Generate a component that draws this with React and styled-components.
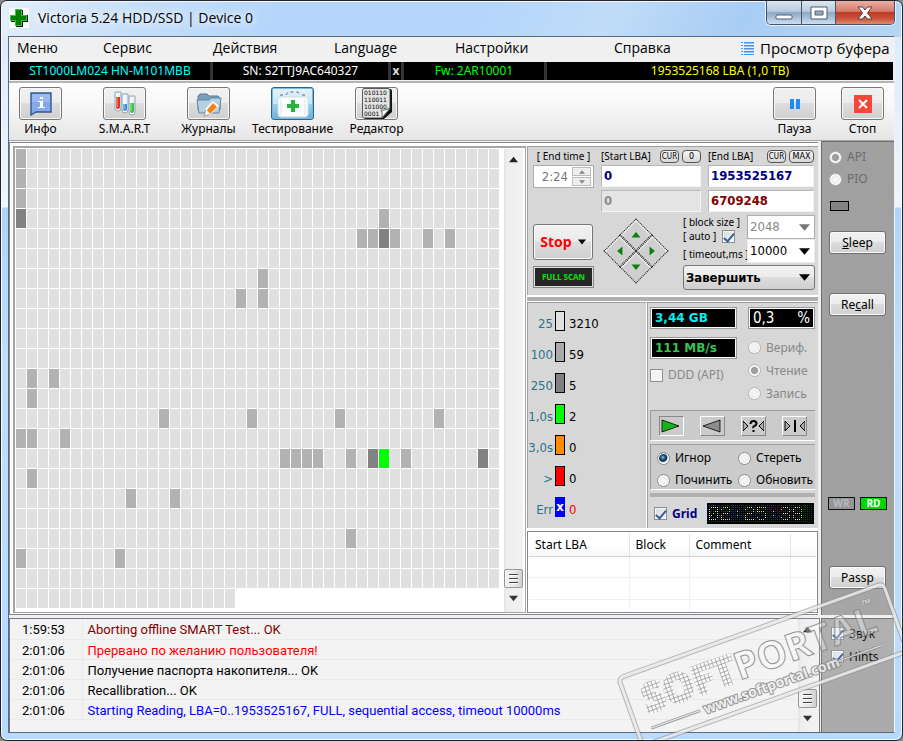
import React from "react";
import styled, { createGlobalStyle, css } from "styled-components";

const ui = '"Noto Sans", "DejaVu Sans Condensed", sans-serif';
const dense = '"DejaVu Sans Condensed", "Noto Sans", sans-serif';
const segoe = '"Open Sans", "Noto Sans", sans-serif';
const verdana = '"DejaVu Sans", sans-serif';

const Global = createGlobalStyle`
  * { box-sizing: border-box; }
  body { margin: 0; background: #8a8a8a; font: 12px/16px ${ui}; color: #000; }
  button, input, select { font: inherit; color: inherit; margin: 0; padding: 0; }
`;

/* ---------- window ---------- */
const Window = styled.div`
  position: relative;
  overflow: hidden;
  min-height: 100vh;
  display: flex;
  flex-direction: column;
  padding: 0 7px 7px;
  border: 1px solid #23232d;
  border-radius: 7px;
  background:
    linear-gradient(115deg, #e4effa 0, #c6dff8 120px, #b4d6fb 260px, #b4d6fb 440px, #c0dcf8 560px, #a8cdf4 680px, #bcd9f6 900px) top / 100% 36px no-repeat,
    linear-gradient(#d8e9fb 0, #eef6ff 206px, #aed4fc 207px, #c1defa 360px, #b7daff 100%);
  box-shadow: inset 0 0 0 1px #f4faff;
`;
const TitleBar = styled.header`
  height: 35px;
  flex: none;
  display: flex;
  justify-content: space-between;
  align-items: flex-start;
`;
const Caption = styled.div`
  display: flex;
  align-items: center;
  gap: 9px;
  margin: 7px 0 0 1px;
  h1 { margin: 0; font: 14px/20px ${segoe}; text-shadow: 0 0 8px #fff, 0 0 8px #fff; }
`;
const WindowButtons = styled.div`
  display: flex;
  height: 24px;
  border: 1px solid #48536a;
  border-top: 0;
  border-radius: 0 0 5px 5px;
  overflow: hidden;
  box-shadow: 0 0 0 1px #e3f1ff;
`;
const WindowButton = styled.button`
  width: ${(p) => p.$w};
  display: grid;
  place-items: center;
  border: 0;
  border-left: ${(p) => (p.$first ? "0" : "1px solid #48536a")};
  background: ${(p) =>
    p.$close
      ? "linear-gradient(#eaafa5 0, #d77b6b 45%, #bd3c28 50%, #c9503a 75%, #e08a70 100%)"
      : "linear-gradient(#d9e6f3 0, #b9cbde 45%, #8fa9c4 50%, #a9c2da 75%, #cde1f2 100%)"};
`;
const Client = styled.main`
  flex: 1;
  display: flex;
  flex-direction: column;
  border: 1px solid #5d6a7a;
  border-right-color: #eef3f8;
  background: #f0f0f0;
`;

/* ---------- menu and drive strip ---------- */
const Menu = styled.nav`
  display: grid;
  grid-template-columns: 86px 110px 121px 121px 159px 127px 1fr;
  align-items: start;
  height: 25px;
  padding-left: 8px;
`;
const MenuItem = styled.button`
  display: flex;
  align-items: center;
  gap: 6px;
  border: 0;
  background: none;
  text-align: left;
  white-space: nowrap;
  font: ${(p) => (p.$size || "14px")}/22px ${segoe};
`;
const Drive = styled.div`
  display: grid;
  grid-template-columns: 200px 175px 10px 140px 1fr;
  gap: 3px;
  height: 18px;
  margin: 0 1px;
  background: #333;
`;
const DriveCell = styled.div`
  background: #000;
  color: ${(p) => p.$color};
  text-align: center;
  line-height: 18px;
  white-space: nowrap;
`;
const DriveClose = styled.button`
  border: 0;
  background: #000;
  color: #ddd;
  font-weight: bold;
  line-height: 16px;
`;

/* ---------- toolbar ---------- */
const Toolbar = styled.div`
  display: flex;
  justify-content: space-between;
  height: 60px;
  margin-top: 1px;
  padding: 4px 10px 0;
  border-top: 2px solid #b4b4b4;
  border-bottom: 1px solid #a8a8a8;
  background: linear-gradient(#fff 0, #f7f7f7 40%, #e6e6e6 100%);
`;
const ToolGroup = styled.div`
  display: flex;
  gap: ${(p) => p.$gap};
`;
const Tool = styled.button`
  width: 43px;
  display: flex;
  flex-direction: column;
  align-items: center;
  border: 0;
  background: none;
  white-space: nowrap;
  line-height: 18px;
`;
const ToolFace = styled.span`
  display: grid;
  place-items: center;
  flex: none;
  width: 43px;
  height: 33px;
  border: 1px solid ${(p) => (p.$on ? "#2c628b" : "#777")};
  border-radius: 3px;
  box-shadow: inset 0 0 0 1px ${(p) => (p.$on ? "#7fb8dc" : "#f8f8f8")};
  background: ${(p) =>
    p.$on
      ? "linear-gradient(#e5f4fc 0, #c4e5f6 50%, #98d1ef 51%, #68b3db 100%)"
      : "linear-gradient(#f2f2f2 0, #ebebeb 48%, #dddddd 50%, #cfcfcf 100%)"};
`;

/* ---------- body ---------- */
const Body = styled.div`
  display: flex;
  gap: 3px;
  height: 474px;
`;
const Work = styled.div`
  flex: 1;
  display: flex;
  gap: 1px;
  margin-top: 1px;
  padding: 3px 0 1px 3px;
  border: 1px solid #828790;
  border-right: 0;
  background: #fff;
`;
const MapFrame = styled.section`
  flex: 1;
  display: flex;
  justify-content: space-between;
  border: 1px solid #a5a5a5;
  border-width: 2px 1px 1px 2px;
  padding: 1px 2px 0 1px;
`;
const Cells = styled.div`
  display: grid;
  grid-template-columns: repeat(44, 10px);
  grid-auto-rows: 19px;
  gap: 1px;
  align-content: start;
`;
const fills = { ok: "#e0e0e0", slow: "#b2b2b2", dark: "#828282", green: "#00ff00" };
const Cell = styled.i`
  background: ${(p) => fills[p.$kind]};
`;
const Scroll = styled.div`
  flex: none;
  width: 19px;
  display: flex;
  flex-direction: column;
  align-items: stretch;
  padding-bottom: 4px;
  background: linear-gradient(90deg, #e3e3e3 0, #eee 3px, #f2f2f2 100%);
`;
const Arrow = styled.button`
  height: 20px;
  border: 0;
  background: none;
  display: grid;
  place-items: center;
`;
const Thumb = styled.div`
  margin-top: auto;
  height: 19px;
  border: 1px solid #979797;
  border-radius: 2px;
  background: linear-gradient(90deg, #f5f5f5, #e9e9e9 50%, #d0d0d0);
  display: grid;
  place-items: center;
`;
const Controls = styled.section`
  flex: none;
  width: 291px;
  display: flex;
  flex-direction: column;
`;
const Panel = styled.div`
  background: #d7d7d7;
  border-top: 1px solid #a0a0a0;
  border-left: 1px solid #a0a0a0;
`;
const Divider = styled.div`
  height: 4px;
  margin: ${(p) => p.$m || "2px 0 1px"};
  background: #b0b0b0;
`;

/* ---------- scan range ---------- */
const RangePanel = styled(Panel)`
  height: 149px;
  padding: 2px 3px 0 5px;
`;
const Range = styled.div`
  display: grid;
  grid-template-columns: 61px 100px 106px;
  column-gap: 7px;
  row-gap: 2px;
`;
const RangeHead = styled.div`
  height: 14px;
  display: flex;
  align-items: center;
  gap: 3px;
  font-size: 10px;
  white-space: nowrap;
  label { flex: 1; text-align: ${(p) => (p.$center ? "center" : "left")}; }
`;
const Tiny = styled.button`
  height: 13px;
  width: ${(p) => p.$w};
  border: 1px solid #555;
  border-radius: 4px;
  background: linear-gradient(#f6f6f6, #d6d6d6);
  font: ${(p) => p.$size || "9px"}/11px ${dense};
`;
const field = css`
  border: 1px solid #b8b8b8;
  border-right-color: #f4f4f4;
  border-bottom-color: #f4f4f4;
  background: ${(p) => (p.disabled ? "#e4e4e4" : "#fff")};
`;
const Field = styled.input`
  ${field}
  width: 100%;
  height: 22px;
  padding: 0 2px 2px;
  font: bold 13px/18px ${dense};
  color: ${(p) => p.$color};
`;
const Spin = styled.div`
  height: 23px;
  display: flex;
  align-items: center;
  border: 1px solid #acacac;
  background: #fff;
  padding-right: 2px;
  input {
    flex: 1;
    min-width: 0;
    border: 0;
    background: none;
    text-align: right;
    padding-right: 4px;
    color: #777;
    font: 13px/18px ${dense};
  }
`;
const SpinButtons = styled.div`
  display: grid;
  gap: 1px;
  button { width: 19px; height: 9px; border: 1px solid #bbb; background: #eee; display: grid; place-items: center; }
`;
const Actions = styled.div`
  display: flex;
  height: 79px;
`;
const ActionCol = styled.div`
  width: 61px;
  display: flex;
  flex-direction: column;
  gap: 6px;
  padding-top: 12px;
`;
const StopButton = styled.button`
  height: 36px;
  width: 60px;
  display: flex;
  align-items: center;
  justify-content: center;
  gap: 6px;
  border: 1px solid #777;
  border-radius: 3px;
  box-shadow: inset 0 0 0 1px #fafafa;
  background: linear-gradient(#f2f2f2 0, #ebebeb 48%, #ddd 50%, #cfcfcf 100%);
  color: #f00;
  font: bold 14px/18px ${segoe};
`;
const FullScan = styled.button`
  height: 22px;
  border: 1px solid #888;
  outline: 0;
  box-shadow: inset 0 0 0 1px #ddd;
  background: #262626;
  color: #00e800;
  font: bold 8px/18px ${segoe};
  white-space: nowrap;
`;
const Pad = styled.div`
  flex: none;
  display: grid;
  grid-template-columns: 23px 23px;
  height: 46px;
  margin: 16px 24px 0 19px;
  transform: rotate(45deg);
  button {
    height: 23px;
    border: 1px dotted #111;
    background: #cfcfcf;
    box-shadow: inset 1px 1px 0 #fff;
    display: grid;
    place-items: center;
  }
  svg { transform: rotate(-45deg); }
`;
const Options = styled.div`
  flex: 1;
  min-width: 0;
  display: flex;
  flex-direction: column;
  gap: 2px;
  margin-top: 3px;
`;
const OptionGrid = styled.div`
  display: grid;
  grid-template-columns: 64px 1fr;
  font-size: 10px;
  line-height: 14px;
  white-space: nowrap;
`;
const Labels = styled.div`
  display: flex;
  flex-direction: column;
  label { display: flex; align-items: center; gap: 6px; height: 14px; }
  label:last-child { height: 16px; margin-top: 3px; }
`;
const Combo = styled.div`
  display: flex;
  align-items: center;
  height: ${(p) => p.$h || "24px"};
  padding: 0 4px 0 2px;
  border: 1px solid ${(p) => (p.$push ? "#777" : p.$off ? "#b0b0b0" : "#ececec")};
  border-radius: ${(p) => (p.$push ? "3px" : "0")};
  background: ${(p) => (p.$push ? "linear-gradient(#f2f2f2 0, #ebebeb 48%, #ddd 50%, #cfcfcf 100%)" : "#fff")};
  select {
    flex: 1;
    min-width: 0;
    appearance: none;
    border: 0;
    outline: 0;
    background: none;
    opacity: 1;
    color: ${(p) => (p.$off ? "#888" : "#000")};
    font: ${(p) => (p.$push ? "bold " : "")}13px/18px ${dense};
  }
`;

/* ---------- statistics ---------- */
const Stats = styled.div`
  flex: none;
  height: 226px;
  display: grid;
  grid-template-columns: 120px 1fr;
`;
const Legend = styled(Panel)`
  padding-top: 8px;
  border-right: 1px solid #fff;
`;
const LegendRow = styled.div`
  height: 31px;
  display: grid;
  grid-template-columns: 25px 10px 1fr;
  column-gap: 2px;
  font: 13px/18px ${dense};
  span { text-align: right; padding-top: 4px; color: #2a7488; white-space: nowrap; }
  b { font-weight: normal; padding: 4px 0 0 2px; color: ${(p) => p.$count || "#000"}; }
`;
const Swatch = styled.i`
  height: 20px;
  border: ${(p) => (p.$err ? "0" : "1px solid #000")};
  background: ${(p) => p.$color};
  color: #fff;
  font: bold 13px/20px ${dense};
  text-align: center;
`;
const Right = styled(Panel)`
  padding: 4px 3px 0 2px;
`;
const Readouts = styled.div`
  display: grid;
  grid-template-columns: 87px 67px;
  column-gap: 11px;
  height: 103px;
`;
const Column = styled.div`
  display: flex;
  flex-direction: column;
  gap: ${(p) => p.$gap};
`;
const Readout = styled.output`
  height: 22px;
  display: flex;
  justify-content: space-between;
  align-items: center;
  padding: 0 4px;
  border: 1px solid #999;
  box-shadow: inset 0 0 0 1px #fff;
  background: #000;
  color: ${(p) => p.$color};
  font: ${(p) => p.$font};
`;
const Tick = styled.label`
  display: flex;
  align-items: center;
  gap: 5px;
  height: ${(p) => p.$h || "16px"};
  color: ${(p) => p.$color || "#000"};
  white-space: nowrap;
  font-weight: ${(p) => (p.$bold ? "bold" : "normal")};
`;
const Check = styled.input`
  appearance: none;
  flex: none;
  width: 13px;
  height: 13px;
  border: 1px solid #8e8f8f;
  box-shadow: inset 0 0 0 1px #f6f6f6;
  background: ${(p) => (p.disabled ? "#f4f4f4" : "linear-gradient(135deg, #d5dae0, #f8f8f8)")};
  display: grid;
  place-items: center;
  &:checked::after {
    content: "";
    width: 4px;
    height: 9px;
    border: solid #3a5f9e;
    border-width: 0 2px 2px 0;
    transform: rotate(40deg);
  }
`;
const Radio = styled.input`
  appearance: none;
  flex: none;
  width: 13px;
  height: 13px;
  border: 1px solid ${(p) => (p.disabled ? "#b4b4b4" : "#8a8d92")};
  border-radius: 50%;
  background: radial-gradient(#f8f8f8, #e4e4e4);
  box-shadow: inset 0 0 0 1px #fff;
  &:checked {
    background: ${(p) =>
      p.disabled
        ? "radial-gradient(circle, #a4a4a4 0, #999 3px, #eee 4px)"
        : "radial-gradient(circle at 45% 40%, #7fd0f8 0, #1d5c8c 2px, #123048 4px, #eee 5px)"};
  }
`;
const Inset = styled.div`
  border-top: 1px solid #9c9c9c;
  border-left: 1px solid #9c9c9c;
  border-bottom: 1px solid #fff;
  background: #cbcbcb;
`;
const Transport = styled(Inset)`
  display: flex;
  gap: 16px;
  height: 31px;
  padding: 5px 0 0 8px;
`;
const Step = styled.button`
  width: 25px;
  height: 20px;
  display: grid;
  place-items: center;
  border: 1px solid;
  border-color: ${(p) => (p.$on ? "#888 #fff #fff #888" : "#fff #888 #888 #fff")};
  background: #cbcbcb;
`;
const ModeGrid = styled(Inset)`
  height: 46px;
  margin-top: 3px;
  padding: 2px 0 0 6px;
  display: grid;
  grid-template-columns: 81px 1fr;
  grid-auto-rows: 22px;
`;
const ClockRow = styled.div`
  display: flex;
  justify-content: space-between;
  align-items: center;
  padding: 0 1px 0 4px;
`;

/* ---------- defects table ---------- */
const Defects = styled.div`
  flex: 1;
  margin-top: 3px;
  border: 1px solid #828790;
  padding: 2px 1px;
  background: #fff;
`;
const DefectTable = styled.table`
  width: 100%;
  height: 100%;
  border-collapse: collapse;
  table-layout: fixed;
  th {
    height: 22px;
    padding: 0 0 0 6px;
    border-right: 1px solid #e2e2e2;
    border-bottom: 1px solid #d5d5d5;
    background: linear-gradient(#fff 50%, #f5f6f7);
    text-align: left;
    font-weight: normal;
  }
  td { padding: 0; border-right: 1px solid #f0f0f0; border-bottom: 1px solid #f0f0f0; }
  tr > :last-child { border-right: 0; }
  tr:last-child td { border-bottom: 0; }
`;

/* ---------- side column ---------- */
const Side = styled.aside`
  flex: none;
  width: 73px;
  display: flex;
  flex-direction: column;
  padding: ${(p) => p.$pad};
  border: 1px solid #6e6e6e;
  border-right: 0;
  border-bottom: 0;
  background: ${(p) => (p.$light ? "#ababab" : "#a0a0a0")};
`;
const SideButton = styled.button`
  height: 23px;
  width: 57px;
  margin-top: ${(p) => p.$top};
  border: 1px solid #707070;
  border-radius: 3px;
  background: linear-gradient(#f2f2f2 0, #ebebeb 48%, #ddd 50%, #cfcfcf 100%);
  box-shadow: inset 0 0 0 1px #fafafa;
`;
const Lamp = styled.i`
  width: 19px;
  height: 10px;
  margin: 11px 0 0 1px;
  border: 1px solid #000;
  background: #828282;
`;
const Flags = styled.div`
  display: flex;
  gap: 5px;
  margin: 181px 0 0 -1px;
`;
const Flag = styled.span`
  width: 27px;
  height: 13px;
  border: 1px solid #111;
  background: ${(p) => (p.$on ? "#00d800" : "#94959a")};
  color: ${(p) => (p.$on ? "#fff" : "#b9babd")};
  text-align: center;
  font: bold 10px/11px ${segoe};
`;

/* ---------- log ---------- */
const Bottom = styled.div`
  flex: 1;
  display: flex;
  gap: 1px;
  margin-top: 3px;
`;
const LogPane = styled.section`
  flex: 1;
  display: flex;
  justify-content: space-between;
  padding-right: 2px;
  border: 1px solid #747c88;
  border-bottom: 0;
  background: #f3f3f3;
`;
const LogTable = styled.table`
  flex: 1;
  align-self: flex-start;
  border-collapse: collapse;
  td { height: 20px; padding: 3px 0 0 5px; border-bottom: 1px solid #eaeaea; font: 13px/16px Roboto, ${ui}; }
  td:first-child { width: 72px; padding-left: 12px; border-right: 1px solid #eaeaea; }
`;
const LogRow = styled.tr`
  td:last-child { color: ${(p) => p.$color}; }
`;

/* ---------- stamp ---------- */
const Stamp = styled.svg`
  position: absolute;
  right: -7px;
  bottom: -14px;
  width: 300px;
  height: 190px;
  pointer-events: none;
`;

/* ---------- icons ---------- */
const Tri = ({ dir = "down", size = 9, color = "#000" }) => {
  const d = { down: "M0 2h10l-5 6z", up: "M0 8h10l-5-6z", left: "M8 0v10l-6-5z", right: "M2 0v10l6-5z" }[dir];
  return (
    <svg width={size} height={size} viewBox="0 0 10 10" aria-hidden="true">
      <path d={d} fill={color} />
    </svg>
  );
};

const AppIcon = () => (
  <svg width="20" height="20" viewBox="0 0 20 20" aria-hidden="true">
    <path fill="#fff" d="M0 0h20v20H0z" />
    <path fill="#111" d="M7 2h7v5h5v7h-5v5H7v-5H2V8h5z" />
    <path fill="#35c435" d="M6 1h7v6h5v6h-5v5H6v-5H1V7h5z" />
    <path fill="#008000" d="M7 2h5v6h5v4h-5v5H7v-5H2V8h5z" />
  </svg>
);

const InfoIcon = () => (
  <svg width="22" height="24" viewBox="0 0 22 24" aria-hidden="true">
    <path fill="#84a9e8" stroke="#36578a" strokeWidth="1.4" d="M1 1h20v19H6l-5 3z" />
    <path fill="#a8c4f5" d="M2 2h18v8H2z" opacity=".6" />
    <path fill="#fff" d="M10 5h3v2h-3zM8 9h5v6h2v1H8v-1h2v-5H8z" />
  </svg>
);

const TubesIcon = () => (
  <svg width="22" height="26" viewBox="0 0 22 26" aria-hidden="true">
    {[[1, 1, 6, "#e0331f"], [8, 3, 13, "#3f8fd8"], [15, 5, 12, "#3cc043"]].map(([x, y, l, c]) => (
      <g key={x}>
        <path d={`M${x} ${y}h6v16a3 3 0 0 1-6 0z`} fill="#edf5fa" stroke="#90a4b3" />
        <path d={`M${x + 1} ${l}h4v${y + 15 - l}a2 2 0 0 1-4 0z`} fill={c} />
        <path d={`M${x + 2} ${y + 2}v13`} stroke="#fff" opacity=".6" />
      </g>
    ))}
  </svg>
);

const JournalIcon = () => (
  <svg width="26" height="26" viewBox="0 0 26 26" aria-hidden="true">
    <path fill="#7b9fb8" stroke="#587b93" d="M2 5l2-2h7l2 2h9l2 2v12H2z" />
    <path fill="#b4d0e2" stroke="#638aa4" d="M1 9h12l2-2h10l-2 15H3z" />
    <path fill="#fff" stroke="#777" strokeWidth=".6" d="M8 25l2-6 4 4z" />
    <path fill="#fff" d="M9 18L17 10l6 5-9 9z" />
    <path fill="#f08418" d="M11 19l6-7 4 4-7 7z" />
  </svg>
);

const TestIcon = () => (
  <svg width="32" height="28" viewBox="0 0 32 28" aria-hidden="true">
    <path fill="none" stroke="#666" strokeDasharray="3 3" d="M9 5l2-3h10l2 3M3 5h5M25 5h4" />
    <rect x="1" y="7" width="30" height="20" rx="3" fill="#fafcfd" stroke="#d4dde2" />
    <path d="M4 9v16M28 9v16" stroke="#e0e5e8" />
    <path fill="#27b43c" d="M14 10h4v4h4v4h-4v4h-4v-4h-4v-4h4z" />
  </svg>
);

const HexIcon = () => (
  <svg width="30" height="31" viewBox="0 0 30 31" aria-hidden="true">
    <path fill="#111" d="M4 1h24q2 0 2 2v21l-8 7H4q-2 0-2-2V3q0-2 2-2z" />
    <path fill="#e4e4e4" stroke="#333" strokeWidth=".8" d="M2 .5h24q2 0 2 2V21l-8 9H2Q.5 30 .5 28V2.500Q.5 .5 2 .5z" />
    <g fontFamily="DejaVu Sans, sans-serif" fontSize="6" fill="#000">
      <text x="2" y="7">010110</text>
      <text x="2" y="14">110011</text>
      <text x="2" y="21">101000</text>
      <text x="2" y="28">0001</text>
    </g>
    <path fill="#fff" stroke="#444" strokeWidth=".8" d="M28 20l-8 10q1-6-1-8 4 1 9-2z" />
  </svg>
);

const PauseIcon = () => (
  <svg width="10" height="10" viewBox="0 0 10 10" aria-hidden="true">
    <path fill="#1e8cf5" d="M0 0h4v10H0zM6 0h4v10H6z" />
  </svg>
);

const StopIcon = () => (
  <svg width="18" height="18" viewBox="0 0 18 18" aria-hidden="true">
    <path fill="#f6473b" d="M0 0h18v18H0z" />
    <path stroke="#fff" strokeWidth="2" d="M5 5l8 8M13 5l-8 8" />
  </svg>
);

const ListIcon = () => (
  <svg width="13" height="13" viewBox="0 0 13 13" aria-hidden="true">
    {[0, 3, 6, 9, 12].map((y) => (
      <path key={y} fill="#3b97ec" d={`M0 ${y}h2v1H0zM3 ${y}h10v1H3z`} />
    ))}
    <path fill="#8cc3f7" d="M3 1h10v1H3zM3 4h10v1H3zM3 7h10v1H3zM3 10h10v1H3z" />
  </svg>
);

const Grip = () => (
  <svg width="9" height="11" viewBox="0 0 9 11" aria-hidden="true">
    <path stroke="#444" d="M0 1.500h9M0 5.500h9M0 9.500h9" />
    <path stroke="#fff" d="M0 2.500h9M0 6.500h9M0 10.500h9" />
  </svg>
);

const stepIcons = {
  play: <path d="M1 1l17 6-17 6z" fill="#17b317" stroke="#000" strokeWidth=".8" />,
  back: <path d="M18 1L1 7l17 6z" fill="#8c8c8c" stroke="#000" strokeWidth=".8" />,
  seek: (
    <>
      <path d="M0 2l5 5-5 5zM21 2l-5 5 5 5z" fill="#aaa" stroke="#000" />
      <path d="M7.500 5q0-3 3-3t3 2.500q0 1.500-2 2.500t-1 2M10.500 11v2" fill="none" stroke="#000" strokeWidth="2" />
    </>
  ),
  edge: (
    <>
      <path d="M1 2l5 5-5 5zM21 2l-5 5 5 5z" fill="#aaa" stroke="#000" />
      <path d="M11 1v12" stroke="#000" strokeWidth="2" />
    </>
  ),
};

const dots = {
  0: ["01111", "10001", "10011", "10101", "11001", "10001", "11110"],
  2: ["01110", "10001", "00001", "01110", "10000", "10000", "11111"],
  5: ["11111", "10000", "11110", "00001", "00001", "10001", "01110"],
  3: ["01110", "10001", "00001", "01110", "00001", "10001", "01110"],
  8: ["01110", "10001", "10001", "01110", "10001", "10001", "01110"],
  ":": ["00000", "00000", "00100", "00000", "00100", "00000", "00000"],
};
const Clock = ({ time }) => {
  const lit = [];
  [...time].forEach((ch, i) =>
    dots[ch].forEach((row, y) =>
      [...row].forEach((on, x) => {
        if (on === "1") lit.push(`M${2 + (i * 6 + x) * 2} ${4 + y * 2}h1v1h-1z`);
      })
    )
  );
  return (
    <svg width="107" height="21" viewBox="0 0 107 21" role="img" aria-label={time} shapeRendering="crispEdges">
      <defs>
        <pattern id="led" width="2" height="2" patternUnits="userSpaceOnUse">
          <path d="M0 0h1v1H0z" fill="#0b4d12" />
        </pattern>
      </defs>
      <path d="M0 0h107v21H0z" fill="#000" />
      <path d="M2 2h104v17H2z" fill="url(#led)" />
      <path d={lit.join("")} fill="#f3f32a" />
    </svg>
  );
};

/* ---------- data ---------- */
const marks = {
  slow: [[0, 0], [1, 0], [2, 0], [3, 33], [4, 31], [4, 32], [4, 34], [4, 37], [4, 39], [6, 22], [7, 20], [7, 22],
    [11, 1], [11, 3], [12, 1], [13, 13], [13, 21], [13, 29], [13, 38], [14, 0], [14, 1], [14, 4],
    [15, 24], [15, 25], [15, 26], [15, 27], [15, 30], [15, 35], [16, 1], [17, 10], [17, 14], [19, 30], [20, 0], [20, 9]],
  dark: [[3, 0], [4, 33], [15, 32], [15, 42]],
  green: [[15, 33]],
};
const cells = Array(22 * 44 + 20).fill("ok");
Object.entries(marks).forEach(([kind, list]) => list.forEach(([r, c]) => (cells[r * 44 + c] = kind)));

const legend = [
  ["25", "#e0e0e0", "3210"],
  ["100", "#a9a9a9", "59"],
  ["250", "#7f7f7f", "5"],
  ["1,0s", "#00ff00", "2"],
  ["3,0s", "#ff8c00", "0"],
  [">", "#ff0000", "0"],
];
const log = [
  ["1:59:53", "Aborting offline SMART Test... OK", "#800000"],
  ["2:01:06", "Прервано по желанию пользователя!", "#f00"],
  ["2:01:06", "Получение паспорта накопителя... OK", "#000"],
  ["2:01:06", "Recallibration... OK", "#000"],
  ["2:01:06", "Starting Reading, LBA=0..1953525167, FULL, sequential access, timeout 10000ms", "#00f"],
];
const tools = [
  ["Инфо", <InfoIcon />],
  ["S.M.A.R.T", <TubesIcon />],
  ["Журналы", <JournalIcon />],
  ["Тестирование", <TestIcon />, true],
  ["Редактор", <HexIcon />],
];
const controls = [
  ["Пауза", <PauseIcon />],
  ["Стоп", <StopIcon />],
];

const ToolButtons = ({ items, gap }) => (
  <ToolGroup $gap={gap}>
    {items.map(([name, icon, on]) => (
      <Tool key={name} aria-pressed={!!on}>
        <ToolFace $on={on}>{icon}</ToolFace>
        {name}
      </Tool>
    ))}
  </ToolGroup>
);

const ScrollBar = () => (
  <Scroll>
    <Arrow aria-label="Up"><Tri dir="up" color="#222" /></Arrow>
    <Thumb><Grip /></Thumb>
    <Arrow aria-label="Down"><Tri color="#333" /></Arrow>
  </Scroll>
);

export default function App() {
  return (
    <Window>
      <Global />
      <TitleBar>
        <Caption>
          <AppIcon />
          <h1>Victoria 5.24 HDD/SSD | Device 0</h1>
        </Caption>
        <WindowButtons>
          <WindowButton $first $w="34px" aria-label="Minimize">
            <svg width="18" height="14"><rect x="1" y="9" width="16" height="4" rx="1" fill="#fff" stroke="#4d5a6d" /></svg>
          </WindowButton>
          <WindowButton $w="34px" aria-label="Maximize">
            <svg width="18" height="14">
              <path fillRule="evenodd" fill="#fff" stroke="#4d5a6d" d="M1 1h16v12H1zM5 5h8v4H5z" />
            </svg>
          </WindowButton>
          <WindowButton $w="59px" $close aria-label="Close">
            <svg width="16" height="14" viewBox="0 0 16 14">
              <path fill="#fff" stroke="#5c3b40" d="M1 1h4.500L8 4l2.500-3H15l-4.500 6 4.500 6h-4.500L8 10l-2.500 3H1l4.500-6z" />
            </svg>
          </WindowButton>
        </WindowButtons>
      </TitleBar>
      <Client>
        <Menu>
          {["Меню", "Сервис", "Действия", "Language", "Настройки", "Справка"].map((m) => (
            <MenuItem key={m}>{m}</MenuItem>
          ))}
          <MenuItem $size="15px"><ListIcon />Просмотр буфера</MenuItem>
        </Menu>
        <Drive>
          <DriveCell $color="#0ff">ST1000LM024 HN-M101MBB</DriveCell>
          <DriveCell $color="#fff">SN: S2TTJ9AC640327</DriveCell>
          <DriveClose aria-label="Close drive">x</DriveClose>
          <DriveCell $color="#0f0">Fw: 2AR10001</DriveCell>
          <DriveCell $color="#ff0">1953525168 LBA (1,0 TB)</DriveCell>
        </Drive>
        <Toolbar>
          <ToolButtons items={tools} gap="41px" />
          <ToolButtons items={controls} gap="25px" />
        </Toolbar>

        <Body>
          <Work>
            <MapFrame aria-label="Surface map">
              <Cells>{cells.map((kind, i) => <Cell key={i} $kind={kind} />)}</Cells>
              <ScrollBar />
            </MapFrame>
            <Controls>
              <RangePanel>
                <Range>
                  <RangeHead $center><label htmlFor="endTime">[ End time ]</label></RangeHead>
                  <RangeHead><label htmlFor="startLba">[Start LBA]</label><Tiny $w="19px" $size="8px">CUR</Tiny><Tiny $w="19px">0</Tiny></RangeHead>
                  <RangeHead><label htmlFor="endLba">[End LBA]</label><Tiny $w="19px" $size="8px">CUR</Tiny><Tiny $w="25px">MAX</Tiny></RangeHead>
                  <Spin>
                    <input id="endTime" defaultValue="2:24" disabled />
                    <SpinButtons>
                      <button aria-label="Increase"><Tri dir="up" size={6} color="#888" /></button>
                      <button aria-label="Decrease"><Tri size={6} color="#888" /></button>
                    </SpinButtons>
                  </Spin>
                  <Field id="startLba" defaultValue="0" $color="#000080" />
                  <Field id="endLba" defaultValue="1953525167" $color="#000080" />
                  <span />
                  <Field aria-label="Start position" defaultValue="0" disabled $color="#8a8a8a" />
                  <Field aria-label="Current position" defaultValue="6709248" $color="#800000" />
                </Range>
                <Actions>
                  <ActionCol>
                    <StopButton>Stop<Tri size={8} /></StopButton>
                    <FullScan>FULL SCAN</FullScan>
                  </ActionCol>
                  <Pad>
                    <button aria-label="Up"><Tri dir="up" color="#0c800c" /></button>
                    <button aria-label="Right"><Tri dir="right" color="#0c800c" /></button>
                    <button aria-label="Left"><Tri dir="left" color="#0c800c" /></button>
                    <button aria-label="Down"><Tri color="#0c800c" /></button>
                  </Pad>
                  <Options>
                    <OptionGrid>
                      <Labels>
                        <label htmlFor="block">[ block size ]</label>
                        <label>[ auto ]<Check type="checkbox" defaultChecked /></label>
                        <label htmlFor="timeout">[ timeout,ms ]</label>
                      </Labels>
                      <div>
                        <Combo $off><select id="block" disabled><option>2048</option></select><Tri size={11} color="#777" /></Combo>
                        <Combo><select id="timeout"><option>10000</option></select><Tri size={11} /></Combo>
                      </div>
                    </OptionGrid>
                    <Combo $push $h="25px"><select aria-label="On finish"><option>Завершить</option></select><Tri size={11} /></Combo>
                  </Options>
                </Actions>
              </RangePanel>
              <Divider />
              <Stats>
                <Legend>
                  {legend.map(([name, color, count]) => (
                    <LegendRow key={name}><span>{name}</span><Swatch $color={color} /><b>{count}</b></LegendRow>
                  ))}
                  <LegendRow $count="#f00"><span>Err</span><Swatch $err $color="#00f">x</Swatch><b>0</b></LegendRow>
                </Legend>
                <Right>
                  <Readouts>
                    <Column $gap="8px">
                      <Readout $color="#00f0f0" $font={`bold 12px/18px ${verdana}`}>3,44 GB</Readout>
                      <Readout $color="#35c455" $font={`bold 12px/18px ${verdana}`}>111 MB/s</Readout>
                      <Tick $color="#888"><Check type="checkbox" disabled />DDD (API)</Tick>
                    </Column>
                    <Column $gap="7px">
                      <Readout $color="#fff" $font={`15px/18px ${dense}`}><span>0,3</span><span>%</span></Readout>
                      <div>
                        <Tick $h="23px" $color="#888"><Radio type="radio" name="op" disabled />Вериф.</Tick>
                        <Tick $h="23px" $color="#888"><Radio type="radio" name="op" disabled defaultChecked />Чтение</Tick>
                        <Tick $h="23px" $color="#888"><Radio type="radio" name="op" disabled />Запись</Tick>
                      </div>
                    </Column>
                  </Readouts>
                  <Transport>
                    {Object.keys(stepIcons).map((k) => (
                      <Step key={k} $on={k === "play"} aria-label={k}>
                        <svg width="21" height="14" viewBox="0 0 21 14">{stepIcons[k]}</svg>
                      </Step>
                    ))}
                  </Transport>
                  <ModeGrid>
                    <Tick $h="22px"><Radio type="radio" name="mode" defaultChecked />Игнор</Tick>
                    <Tick $h="22px"><Radio type="radio" name="mode" />Стереть</Tick>
                    <Tick $h="22px"><Radio type="radio" name="mode" />Починить</Tick>
                    <Tick $h="22px"><Radio type="radio" name="mode" />Обновить</Tick>
                  </ModeGrid>
                  <Divider $m="3px 0 6px" />
                  <ClockRow>
                    <Tick $bold $color="#000080"><Check type="checkbox" defaultChecked />Grid</Tick>
                    <Clock time="02:25:38" />
                  </ClockRow>
                </Right>
              </Stats>
              <Defects>
                <DefectTable>
                  <colgroup><col width="100" /><col width="60" /><col width="101" /><col /></colgroup>
                  <thead><tr><th>Start LBA</th><th>Block</th><th>Comment</th><th aria-label="Extra" /></tr></thead>
                  <tbody>
                    {[0, 1, 2].map((r) => <tr key={r}><td /><td /><td /><td /></tr>)}
                  </tbody>
                </DefectTable>
              </Defects>
            </Controls>
          </Work>
          <Side $pad="4px 0 0 7px">
            <Tick $h="22px" $color="#6c6c6c"><Radio type="radio" name="api" disabled defaultChecked />API</Tick>
            <Tick $h="22px" $color="#6c6c6c"><Radio type="radio" name="api" disabled />PIO</Tick>
            <Lamp />
            <SideButton $top="20px"><u>S</u>leep</SideButton>
            <SideButton $top="39px">Re<u>c</u>all</SideButton>
            <Flags><Flag>WR</Flag><Flag $on>RD</Flag></Flags>
            <SideButton $top="56px">Passp</SideButton>
          </Side>
        </Body>

        <Bottom>
          <LogPane aria-label="Log">
            <LogTable>
              <tbody>
                {log.map(([time, text, color], i) => (
                  <LogRow key={i} $color={color}><td>{time}</td><td>{text}</td></LogRow>
                ))}
              </tbody>
            </LogTable>
            <ScrollBar />
          </LogPane>
          <Side $light $pad="3px 0 0 9px">
            <Tick $h="23px"><Check type="checkbox" defaultChecked />Звук</Tick>
            <Tick $h="23px"><Check type="checkbox" defaultChecked />Hints</Tick>
          </Side>
        </Bottom>
      </Client>

      <Stamp viewBox="0 0 300 190" aria-hidden="true">
        <defs>
          <pattern id="bricks" width="4" height="4" patternUnits="userSpaceOnUse">
            <path d="M0 0h4v4H0z" fill="#a0a0a0" />
            <path d="M0 0h3v3H0z" fill="#fff" />
          </pattern>
        </defs>
        <g transform="translate(7 113) rotate(-19.700)" opacity=".85">
          <rect x="2" y="2" width="281" height="72" rx="5" fill="#fff" fillOpacity=".08" stroke="#8c8c8c" strokeWidth="5" strokeOpacity=".7" />
          <rect x="2" y="2" width="281" height="72" rx="5" fill="none" stroke="#e9e9e9" strokeWidth="3" />
          <g fontFamily="Open Sans, sans-serif" fontWeight="bold" stroke="#858585">
            <text x="18" y="45" fontSize="39" fill="url(#bricks)" stroke="url(#bricks)" strokeWidth="3">SOFT</text>
            <text x="115" y="45" fontSize="38" fill="#fff" fillOpacity=".4" strokeWidth="1">PORTAL</text>
            <text x="256" y="20" fontSize="12" fill="#eee" strokeWidth="1" paintOrder="stroke">™</text>
            <text x="72" y="65" fontSize="14" fill="#f0f0f0" strokeWidth="2" paintOrder="stroke">www.softportal.com</text>
          </g>
          <path d="M16 60h52M214 60h46" stroke="#8e8e8e" strokeWidth="3" />
          <path d="M16 60h52M214 60h46" stroke="#eee" />
        </g>
      </Stamp>
    </Window>
  );
}
